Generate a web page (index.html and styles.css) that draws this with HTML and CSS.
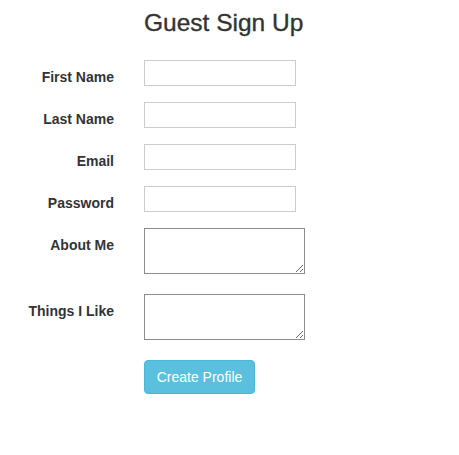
FILE: index.html
```html
<!DOCTYPE html>
<html>
<head>
<meta charset="utf-8">
<title>Guest Sign Up</title>
<link rel="stylesheet" href="styles.css">
</head>
<body>
<form class="signup">
  <h1 class="title">Guest Sign Up</h1>

  <label class="label" for="first">First Name</label>
  <div class="field"><input class="input" id="first" type="text"></div>

  <label class="label" for="last">Last Name</label>
  <div class="field"><input class="input" id="last" type="text"></div>

  <label class="label" for="email">Email</label>
  <div class="field"><input class="input" id="email" type="email"></div>

  <label class="label" for="password">Password</label>
  <div class="field"><input class="input" id="password" type="password"></div>

  <label class="label" for="about">About Me</label>
  <div class="field"><textarea class="area" id="about"></textarea></div>

  <label class="label" for="likes">Things I Like</label>
  <div class="field"><textarea class="area" id="likes"></textarea></div>

  <div class="field actions"><button class="btn" type="button">Create Profile</button></div>
</form>
</body>
</html>
```

FILE: styles.css
```css
html, body {
  background: #fff;
}

body {
  margin: 8px;
  font-family: "Liberation Sans", Arial, Helvetica, sans-serif;
  color: #333;
}

.signup {
  display: grid;
  grid-template-columns: 106px 1fr;
  column-gap: 30px;
  row-gap: 16px;
  padding-top: 2px;
}

.title {
  grid-column: 2;
  margin: 0 0 8px 0;
  font-size: 24.5px;
  line-height: 26px;
  font-weight: 400;
  color: #333;
  -webkit-text-stroke: 0.35px #333;
}

.label {
  grid-column: 1;
  text-align: right;
  font-size: 14px;
  line-height: 18px;
  font-weight: 700;
  padding-top: 8px;
  white-space: nowrap;
}

.field {
  grid-column: 2;
}

.input {
  display: block;
  box-sizing: border-box;
  width: 152px;
  height: 26px;
  margin: 0;
  padding: 2px 4px;
  border: 1px solid #cccccc;
  border-radius: 0;
  background: #fff;
  font: 13px "Liberation Sans", Arial, sans-serif;
  outline: none;
}

.area {
  display: block;
  box-sizing: border-box;
  width: 161px;
  height: 46px;
  margin: 0 0 4px 0;
  padding: 2px;
  border: 1px solid #8c8c8c;
  border-radius: 0;
  background: #fff;
  font: 13px "Liberation Mono", monospace;
  outline: none;
}

.btn {
  display: inline-block;
  box-sizing: border-box;
  width: 111px;
  height: 34px;
  padding: 6px 0;
  border: 1px solid #46b8da;
  border-radius: 4px;
  background: #5bc0de;
  color: #fff;
  font: 14px/20px "Liberation Sans", Arial, sans-serif;
  text-align: center;
  cursor: pointer;
}
```
